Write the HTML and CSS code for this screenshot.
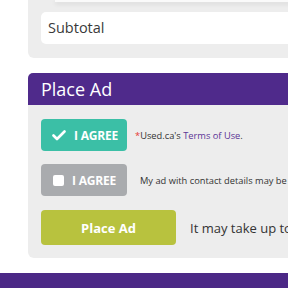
FILE: index.html
```
<!DOCTYPE html>
<html lang="en">
<head>
    <meta charset="UTF-8">
    <title>Place Ad</title>
    <link rel="stylesheet" href="styles.css">
</head>
<body>
    <div class="page">
        <div class="summary">
            <div class="summary-stub"></div>
            <div class="subtotal">Subtotal</div>
        </div>

        <div class="place-ad">
            <div class="place-ad-header">Place Ad</div>
            <div class="place-ad-body">
                <div class="agree-row">
                    <button class="agree agree-on">
                        <svg class="check" width="14" height="11" viewBox="0 0 14 11">
                            <path d="M1.5 5.5 L5 9 L12.5 1.5" fill="none" stroke="#fff" stroke-width="2.6" stroke-linecap="round" stroke-linejoin="round"/>
                        </svg>
                        I AGREE
                    </button>
                    <p class="agree-note"><span class="req">*</span>Used.ca's <a href="#">Terms of Use</a>.</p>
                </div>
                <div class="agree-row">
                    <button class="agree agree-off">
                        <span class="box"></span>
                        I AGREE
                    </button>
                    <p class="agree-note note-wide">My ad with contact details may be</p>
                </div>
                <div class="agree-row">
                    <button class="submit">Place Ad</button>
                    <p class="wait-note">It may take up to 15</p>
                </div>
            </div>
        </div>
    </div>
    <div class="footer-bar"></div>
</body>
</html>
```

FILE: styles.css
```
body {
    margin: 0;
    width: 288px;
    height: 288px;
    overflow: hidden;
    background-color: #fff;
    font-family: 'Open Sans', 'Liberation Sans', sans-serif;
    color: #333;
}
.page {
    padding-left: 28px;
    width: 420px;
}
.summary {
    background-color: #ededed;
    border-radius: 0 0 6px 6px;
    padding: 0 0 14px 13px;
}
.summary-stub {
    height: 2px;
    margin-left: 14px;
    background-color: #fafafa;
    box-shadow: 0 2px 4px rgba(0, 0, 0, 0.12);
}
.subtotal {
    margin-top: 10px;
    height: 32px;
    line-height: 32px;
    padding-left: 7px;
    background-color: #fff;
    border-radius: 5px 0 0 5px;
    font-size: 14.5px;
    color: #3a3a3a;
}
.place-ad {
    margin-top: 15px;
}
.place-ad-header {
    height: 32px;
    line-height: 32px;
    padding-left: 13px;
    background-color: #4f2a8b;
    color: #fff;
    font-size: 18px;
    border-radius: 5px 0 0 0;
}
.place-ad-body {
    background-color: #ededed;
    padding: 14px 13px 13px;
    border-radius: 0 0 6px 6px;
    display: flex;
    flex-direction: column;
    gap: 13px;
}
.agree-row {
    display: flex;
    align-items: center;
}
.agree {
    flex-shrink: 0;
    width: 86px;
    height: 32px;
    border: none;
    border-radius: 4px;
    color: #fff;
    font-family: inherit;
    font-weight: bold;
    font-size: 12px;
    letter-spacing: -0.2px;
    display: flex;
    align-items: center;
    padding: 0 0 0 11px;
    gap: 8px;
}
.agree-on {
    background-color: #3bbfa6;
}
.agree-off {
    background-color: #a9abae;
}
.box {
    width: 11px;
    height: 11px;
    background-color: #fff;
    border-radius: 2px;
    margin-left: 1px;
}
.agree-note {
    margin: 0 0 0 8px;
    font-size: 9.3px;
    white-space: nowrap;
    color: #333;
}
.note-wide {
    margin-left: 13px;
}
.req {
    color: #e53935;
}
.agree-note a {
    color: #5b3596;
    text-decoration: none;
}
.place-ad-body .agree-row:last-child {
    margin-top: 1px;
}
.submit {
    flex-shrink: 0;
    width: 135px;
    height: 35px;
    border: none;
    border-radius: 4px;
    background-color: #b8c23e;
    color: #fff;
    font-family: inherit;
    font-weight: bold;
    font-size: 13px;
}
.wait-note {
    margin: 0 0 0 14px;
    font-size: 13px;
    white-space: nowrap;
    color: #333;
}
.footer-bar {
    margin-top: 15px;
    height: 20px;
    background-color: #4b2886;
}
```
